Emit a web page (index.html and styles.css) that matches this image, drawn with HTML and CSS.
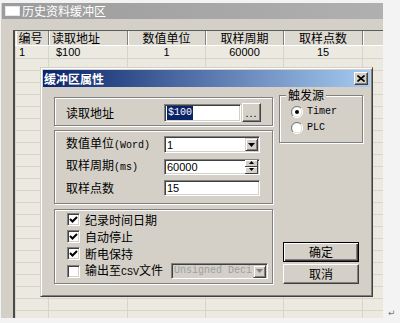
FILE: index.html
```html
<!DOCTYPE html>
<html lang="zh">
<head>
    <meta charset="UTF-8">
    <title>历史资料缓冲区</title>
    <link rel="stylesheet" href="styles.css">
</head>
<body>
    <div class="window">
        <div class="win-title"><span class="win-icon"></span>历史资料缓冲区</div>
        <div class="grid-wrap">
            <table class="grid">
                <colgroup>
                    <col style="width:33px"><col style="width:79px"><col style="width:78px">
                    <col style="width:78px"><col style="width:79px"><col style="width:21px">
                </colgroup>
                <thead>
                    <tr><th class="l">编号</th><th class="l">读取地址</th><th>数值单位</th><th>取样周期</th><th>取样点数</th><th></th></tr>
                </thead>
                <tbody>
                    <tr class="first"><td>1</td><td class="addr">$100</td><td class="c">1</td><td class="c">60000</td><td class="c">15</td><td></td></tr>
                    <tr><td></td><td></td><td></td><td></td><td></td><td></td></tr>
                    <tr><td></td><td></td><td></td><td></td><td></td><td></td></tr>
                    <tr><td></td><td></td><td></td><td></td><td></td><td></td></tr>
                    <tr><td></td><td></td><td></td><td></td><td></td><td></td></tr>
                    <tr><td></td><td></td><td></td><td></td><td></td><td></td></tr>
                    <tr><td></td><td></td><td></td><td></td><td></td><td></td></tr>
                    <tr><td></td><td></td><td></td><td></td><td></td><td></td></tr>
                    <tr><td></td><td></td><td></td><td></td><td></td><td></td></tr>
                    <tr><td></td><td></td><td></td><td></td><td></td><td></td></tr>
                    <tr><td></td><td></td><td></td><td></td><td></td><td></td></tr>
                    <tr><td></td><td></td><td></td><td></td><td></td><td></td></tr>
                    <tr><td></td><td></td><td></td><td></td><td></td><td></td></tr>
                    <tr><td></td><td></td><td></td><td></td><td></td><td></td></tr>
                    <tr><td></td><td></td><td></td><td></td><td></td><td></td></tr>
                    <tr><td></td><td></td><td></td><td></td><td></td><td></td></tr>
                    <tr><td></td><td></td><td></td><td></td><td></td><td></td></tr>
                    <tr><td></td><td></td><td></td><td></td><td></td><td></td></tr>
                    <tr><td></td><td></td><td></td><td></td><td></td><td></td></tr>
                    <tr><td></td><td></td><td></td><td></td><td></td><td></td></tr>
                    <tr><td></td><td></td><td></td><td></td><td></td><td></td></tr>
                    <tr><td></td><td></td><td></td><td></td><td></td><td></td></tr>
                    <tr><td></td><td></td><td></td><td></td><td></td><td></td></tr>
                </tbody>
            </table>
        </div>
    </div>

    <div class="dialog">
        <div class="dlg-title">
            <span>缓冲区属性</span>
            <span class="close">
                <svg width="8" height="7" viewBox="0 0 8 7"><path d="M0.5 0.5 L7.5 6.5 M7.5 0.5 L0.5 6.5" stroke="#000" stroke-width="1.6"/></svg>
            </span>
        </div>
        <div class="dlg-body">
            <div class="left">
                <div class="box box-addr">
                    <div class="row">
                        <span class="label">读取地址</span>
                        <span class="field addr-field"><span class="sel">$100</span></span>
                        <span class="btn dots">...</span>
                    </div>
                </div>
                <div class="box box-params">
                    <div class="row">
                        <span class="label">数值单位<span class="lat">(Word)</span></span>
                        <span class="field combo"><span class="val">1</span>
                            <span class="arrow-btn"><svg width="7" height="4" viewBox="0 0 7 4"><path d="M0 0 H7 L3.5 4 Z" fill="#000"/></svg></span>
                        </span>
                    </div>
                    <div class="row">
                        <span class="label">取样周期<span class="lat">(ms)</span></span>
                        <span class="field spin"><span class="val">60000</span>
                            <span class="spin-btns">
                                <span class="spin-btn"><svg width="5" height="3" viewBox="0 0 5 3"><path d="M0 3 H5 L2.5 0 Z" fill="#000"/></svg></span>
                                <span class="spin-btn"><svg width="5" height="3" viewBox="0 0 5 3"><path d="M0 0 H5 L2.5 3 Z" fill="#000"/></svg></span>
                            </span>
                        </span>
                    </div>
                    <div class="row">
                        <span class="label">取样点数</span>
                        <span class="field plain"><span class="val">15</span></span>
                    </div>
                </div>
                <div class="box box-opts">
                    <div class="check-row">
                        <span class="check on"><svg width="9" height="9" viewBox="0 0 9 9"><path d="M1 4 L3.5 6.5 L8 2" fill="none" stroke="#000" stroke-width="2"/></svg></span>
                        <span>纪录时间日期</span>
                    </div>
                    <div class="check-row">
                        <span class="check on"><svg width="9" height="9" viewBox="0 0 9 9"><path d="M1 4 L3.5 6.5 L8 2" fill="none" stroke="#000" stroke-width="2"/></svg></span>
                        <span>自动停止</span>
                    </div>
                    <div class="check-row">
                        <span class="check on"><svg width="9" height="9" viewBox="0 0 9 9"><path d="M1 4 L3.5 6.5 L8 2" fill="none" stroke="#000" stroke-width="2"/></svg></span>
                        <span>断电保持</span>
                    </div>
                    <div class="check-row last">
                        <span class="check"></span>
                        <span class="csv-label">输出至<span class="lat">CSV</span>文件</span>
                        <span class="field combo disabled"><span class="val lat">Unsigned Deci</span>
                            <span class="arrow-btn"><svg width="7" height="4" viewBox="0 0 7 4"><path d="M0 0 H7 L3.5 4 Z" fill="#808080"/></svg></span>
                        </span>
                    </div>
                </div>
            </div>
            <div class="right">
                <fieldset class="trigger">
                    <legend>触发源</legend>
                    <div class="radio-row">
                        <svg class="radio" width="12" height="12" viewBox="0 0 12 12">
                            <path d="M10 2 A5.5 5.5 0 0 0 2 10" fill="none" stroke="#808080"/>
                            <path d="M2 10 A5.5 5.5 0 0 0 10 2" fill="none" stroke="#fff"/>
                            <circle cx="6" cy="6" r="4.5" fill="#fff"/>
                            <circle cx="6" cy="6" r="2" fill="#000"/>
                        </svg>
                        <span class="lat">Timer</span>
                    </div>
                    <div class="radio-row">
                        <svg class="radio" width="12" height="12" viewBox="0 0 12 12">
                            <path d="M10 2 A5.5 5.5 0 0 0 2 10" fill="none" stroke="#808080"/>
                            <path d="M2 10 A5.5 5.5 0 0 0 10 2" fill="none" stroke="#fff"/>
                            <circle cx="6" cy="6" r="4.5" fill="#fff"/>
                        </svg>
                        <span class="lat">PLC</span>
                    </div>
                </fieldset>
                <span class="btn push default">确定</span>
                <span class="btn push">取消</span>
            </div>
        </div>
    </div>

    <span class="ret">↵</span>
</body>
</html>
```

FILE: styles.css
```css
body {
    margin: 0;
    width: 400px;
    height: 323px;
    overflow: hidden;
    position: relative;
    background: #f3f3f3;
    font-family: "Noto Sans CJK SC", sans-serif;
    font-size: 12px;
    line-height: 14px;
    color: #000;
}

.lat {
    font-family: "Liberation Mono", monospace;
    font-size: 10px;
}

/* outer window */
.window {
    margin: 3px 0 0 1px;
    width: 382px;
    height: 315px;
    background: #d4d0c8;
    display: flex;
    flex-direction: column;
}

.win-title {
    height: 16px;
    margin-left: 1px;
    padding-left: 3px;
    display: flex;
    align-items: center;
    gap: 2px;
    background: linear-gradient(to right, #9c9c9c, #b0b0b0);
    color: #fff;
    font-size: 12px;
    letter-spacing: 0;
}

.win-icon {
    width: 13px;
    height: 8px;
    background: #fff;
    border: 1px solid #e8e8e8;
}

.grid-wrap {
    margin: 11px 0 0 12px;
    flex: 1;
    overflow: hidden;
    border-left: 2px solid #4a4a4a;
    border-top: 1px solid #5c5c5c;
    background: #ece9e1;
}

.grid {
    border-collapse: collapse;
    table-layout: fixed;
    width: 368px;
}

.grid th {
    height: 14px;
    padding: 0 3px;
    font-weight: normal;
    text-align: center;
    background: #dcd9d1;
    border-right: 1px solid #808080;
    border-bottom: 1px solid #fff;
    box-shadow: inset 1px 0 #fff;
    white-space: nowrap;
}

.grid th.l {
    text-align: left;
}

.grid td {
    height: 11px;
    padding: 0 3px;
    border: 1px solid #d7d4cb;
    font-family: "Liberation Sans", sans-serif;
    font-size: 11px;
    line-height: 11px;
}

.grid tr.first td {
    height: 12px;
}

.grid td.c {
    text-align: center;
}

.grid td.addr {
    padding-left: 7px;
}

/* dialog */
.dialog {
    position: absolute;
    left: 40px;
    top: 67px;
    width: 333px;
    height: 230px;
    box-sizing: border-box;
    padding: 2px;
    background: #d4d0c8;
    border: 1px solid;
    border-color: #d4d0c8 #404040 #404040 #d4d0c8;
    box-shadow: inset 1px 1px #fff, inset -1px -1px #808080;
}

.dlg-title {
    height: 17px;
    padding: 0 2px 0 1px;
    display: flex;
    align-items: center;
    justify-content: space-between;
    background: linear-gradient(to right, #0a246a, #a6caf0);
    color: #fff;
    font-weight: bold;
}

.close {
    width: 14px;
    height: 13px;
    box-sizing: border-box;
    display: flex;
    align-items: center;
    justify-content: center;
    background: #d4d0c8;
    border: 1px solid;
    border-color: #fff #404040 #404040 #fff;
    box-shadow: inset -1px -1px #808080;
}

.dlg-body {
    display: flex;
    gap: 6px;
    padding: 2px 0 0 11px;
}

.left {
    width: 219px;
    margin-top: 8px;
    display: flex;
    flex-direction: column;
}

.box {
    box-sizing: border-box;
    border: 1px solid #808080;
    box-shadow: inset 1px 1px #fff, 1px 1px #fff;
}

.box-addr {
    height: 29px;
    padding: 5px 0 0 11px;
}

.box-params {
    height: 74px;
    margin-top: 4px;
    padding: 5px 0 0 11px;
    display: flex;
    flex-direction: column;
    gap: 5px;
}

.box-opts {
    height: 75px;
    margin-top: 5px;
    padding: 3px 0 0 12px;
}

.row {
    display: flex;
    align-items: center;
}

.label {
    width: 98px;
    flex: none;
    white-space: nowrap;
}

.field {
    box-sizing: border-box;
    height: 17px;
    position: relative;
    display: flex;
    align-items: center;
    background: #fff;
    border: 1px solid;
    border-color: #808080 #fff #fff #808080;
    box-shadow: inset 1px 1px #404040, inset -1px -1px #d4d0c8;
    font-family: "Liberation Sans", sans-serif;
    font-size: 11px;
}

.field .val {
    flex: 1;
    padding-left: 2px;
    white-space: nowrap;
    overflow: hidden;
}

.addr-field {
    width: 77px;
    height: 18px;
}

.sel {
    margin-left: 2px;
    padding: 0 1px;
    line-height: 14px;
    background: #0a246a;
    color: #fff;
    font-family: "Liberation Mono", monospace;
    font-size: 10px;
}

.combo,
.spin,
.plain {
    width: 96px;
}

.spin,
.plain {
    height: 16px;
}

.arrow-btn {
    width: 13px;
    height: 13px;
    margin-right: 1px;
    box-sizing: border-box;
    display: flex;
    align-items: center;
    justify-content: center;
    background: #d4d0c8;
    border: 1px solid;
    border-color: #d4d0c8 #404040 #404040 #d4d0c8;
    box-shadow: inset 1px 1px #fff, inset -1px -1px #808080;
}

.spin-btns {
    display: flex;
    flex-direction: column;
    margin-right: 1px;
}

.spin-btn {
    width: 13px;
    height: 6px;
    display: flex;
    align-items: center;
    justify-content: center;
    background: #d4d0c8;
    border-right: 1px solid #404040;
    border-bottom: 1px solid #404040;
    box-shadow: inset 1px 1px #fff;
    box-sizing: content-box;
    width: 12px;
}

.btn {
    box-sizing: border-box;
    display: flex;
    align-items: center;
    justify-content: center;
    background: #d4d0c8;
    border: 1px solid;
    border-color: #fff #404040 #404040 #fff;
    box-shadow: inset -1px -1px #808080;
}

.dots {
    width: 19px;
    height: 19px;
    margin-left: 1px;
    letter-spacing: 1px;
    font-family: "Liberation Sans", sans-serif;
    font-size: 11px;
}

/* checkboxes */
.check-row {
    height: 13px;
    margin-bottom: 4px;
    display: flex;
    align-items: center;
    gap: 5px;
}

.check-row.last {
    height: 16px;
    margin-top: -1px;
}

.check {
    width: 13px;
    height: 13px;
    flex: none;
    box-sizing: border-box;
    display: flex;
    align-items: center;
    justify-content: center;
    background: #fff;
    border: 1px solid;
    border-color: #808080 #fff #fff #808080;
    box-shadow: inset 1px 1px #404040, inset -1px -1px #d4d0c8;
}

.csv-label {
    width: 81px;
    flex: none;
    white-space: nowrap;
}

.combo.disabled {
    width: 97px;
    height: 16px;
    background: #d4d0c8;
    color: #a0a0a0;
}

/* trigger group */
.right {
    width: 84px;
    display: flex;
    flex-direction: column;
}

.trigger {
    margin: 0;
    padding: 0 0 0 11px;
    height: 54px;
    box-sizing: border-box;
    border: 1px solid #808080;
    box-shadow: inset 1px 1px #fff, 1px 1px #fff;
}

.trigger legend {
    margin-left: -5px;
    padding: 0 2px;
    background: #d4d0c8;
    line-height: 12px;
}

.radio-row {
    height: 14px;
    margin-top: 4px;
    display: flex;
    align-items: center;
    gap: 4px;
}

.radio-row + .radio-row {
    margin-top: 2px;
}

.push {
    width: 76px;
    height: 20px;
    margin-left: 4px;
    margin-top: 2px;
}

.push.default {
    margin-top: 99px;
    border-color: #000;
    box-shadow: inset 1px 1px #fff, inset -1px -1px #404040, inset -2px -2px #808080;
}

.ret {
    position: absolute;
    left: 388px;
    top: 306px;
    font-family: "DejaVu Sans", sans-serif;
    font-size: 9px;
    color: #777;
}
```
